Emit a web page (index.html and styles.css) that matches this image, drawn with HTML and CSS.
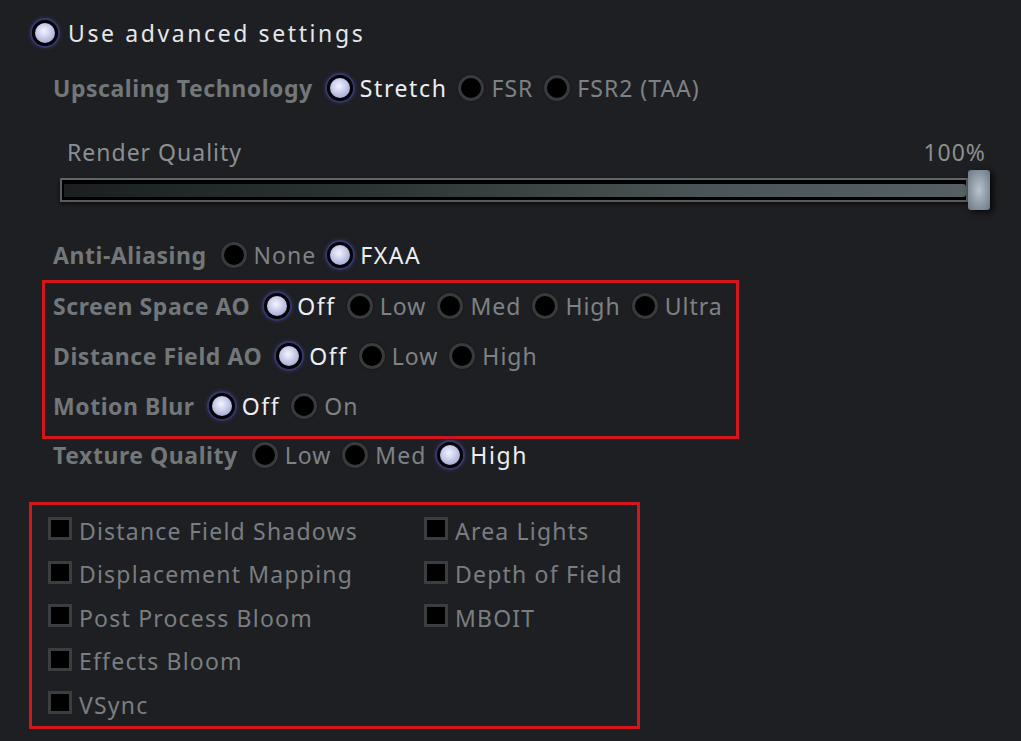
FILE: index.html
```html
<!DOCTYPE html>
<html>
<head>
<meta charset="utf-8">
<link rel="stylesheet" href="styles.css">
</head>
<body>
<div class="page">
  <div class="row top">
    <span class="radio on"></span><span class="title">Use advanced settings</span>
  </div>

  <div class="row r-upscale">
    <span class="label">Upscaling Technology</span>
    <span class="opt"><span class="radio on"></span><span class="val sel">Stretch</span></span>
    <span class="opt"><span class="radio"></span><span class="val">FSR</span></span>
    <span class="opt"><span class="radio"></span><span class="val">FSR2 (TAA)</span></span>
  </div>

  <div class="slider-block">
    <div class="slider-head"><span>Render Quality</span><span>100%</span></div>
    <div class="slider">
      <div class="track"><div class="fill"></div></div>
      <div class="thumb"></div>
    </div>
  </div>

  <div class="row r-aa">
    <span class="label">Anti-Aliasing</span>
    <span class="opt"><span class="radio"></span><span class="val">None</span></span>
    <span class="opt"><span class="radio on"></span><span class="val sel">FXAA</span></span>
  </div>

  <div class="box box1">
    <div class="row">
      <span class="label">Screen Space AO</span>
      <span class="opt"><span class="radio on"></span><span class="val sel">Off</span></span>
      <span class="opt"><span class="radio"></span><span class="val">Low</span></span>
      <span class="opt"><span class="radio"></span><span class="val">Med</span></span>
      <span class="opt"><span class="radio"></span><span class="val">High</span></span>
      <span class="opt"><span class="radio"></span><span class="val">Ultra</span></span>
    </div>
    <div class="row">
      <span class="label">Distance Field AO</span>
      <span class="opt"><span class="radio on"></span><span class="val sel">Off</span></span>
      <span class="opt"><span class="radio"></span><span class="val">Low</span></span>
      <span class="opt"><span class="radio"></span><span class="val">High</span></span>
    </div>
    <div class="row">
      <span class="label">Motion Blur</span>
      <span class="opt"><span class="radio on"></span><span class="val sel">Off</span></span>
      <span class="opt"><span class="radio"></span><span class="val">On</span></span>
    </div>
  </div>

  <div class="row r-tex">
    <span class="label">Texture Quality</span>
    <span class="opt"><span class="radio"></span><span class="val">Low</span></span>
    <span class="opt"><span class="radio"></span><span class="val">Med</span></span>
    <span class="opt"><span class="radio on"></span><span class="val sel">High</span></span>
  </div>

  <div class="box box2">
    <div class="col col1">
      <div class="check"><span class="cb"></span><span>Distance Field Shadows</span></div>
      <div class="check"><span class="cb"></span><span>Displacement Mapping</span></div>
      <div class="check"><span class="cb"></span><span>Post Process Bloom</span></div>
      <div class="check"><span class="cb"></span><span>Effects Bloom</span></div>
      <div class="check"><span class="cb"></span><span>VSync</span></div>
    </div>
    <div class="col">
      <div class="check"><span class="cb"></span><span>Area Lights</span></div>
      <div class="check"><span class="cb"></span><span>Depth of Field</span></div>
      <div class="check"><span class="cb"></span><span>MBOIT</span></div>
    </div>
  </div>
</div>
</body>
</html>
```

FILE: styles.css
```css
html, body {
  margin: 0;
  padding: 0;
  background: #1e1f22;
}
body {
  width: 1021px;
  height: 741px;
  overflow: hidden;
  font-family: "Noto Sans", "Open Sans", sans-serif;
  font-size: 23px;
  color: #7b7f82;
  white-space: nowrap;
}
.page {
  padding-top: 8px;
}
.row {
  display: flex;
  align-items: center;
  height: 50px;
  padding-left: 53px;
}
.row.top {
  padding-left: 32px;
  gap: 10px;
}
.title {
  color: #e4e6ea;
  font-size: 23px;
  letter-spacing: 2.6px;
}
.r-upscale {
  margin-top: 5px;
}
.label {
  font-weight: 700;
  color: #72777a;
  letter-spacing: 0.55px;
  margin-right: 14px;
  flex: none;
}
.opt {
  display: flex;
  align-items: center;
  gap: 7px;
  margin-right: 11px;
  flex: none;
}
.val {
  color: #7e8285;
  letter-spacing: 1px;
}
.val.sel {
  color: #eceef2;
  letter-spacing: 1.6px;
}
.radio {
  display: inline-block;
  width: 26px;
  height: 26px;
  box-sizing: border-box;
  border-radius: 50%;
  background: #000;
  border: 3px solid #383b3d;
  box-shadow: 0 0 2px rgba(0, 0, 0, 0.6);
  flex: none;
}
.radio.on {
  border: 3px solid #040408;
  background: radial-gradient(circle at 45% 40%, #f4f5ff 0%, #c6cae8 45%, #8f94c0 100%);
  box-shadow: 0 0 0 2px #35376c, 0 0 4px 2px rgba(70, 70, 150, 0.45);
}

.slider-block {
  margin-left: 60px;
  width: 930px;
  padding-top: 22px;
}
.slider-head {
  display: flex;
  justify-content: space-between;
  padding-left: 7px;
  padding-right: 4px;
  color: #8b8f92;
  font-size: 23px;
  letter-spacing: 1px;
  line-height: 30px;
  margin-top: 2px;
}
.slider {
  display: flex;
  align-items: center;
  height: 40px;
  margin-top: 3px;
}
.track {
  width: 908px;
  height: 24px;
  box-sizing: border-box;
  border: 2px solid #575c5e;
  border-top-color: #60666a;
  background: #000;
  padding: 4px 0 3px 2px;
  box-shadow: 0 2px 4px rgba(0,0,0,0.6);
}
.fill {
  height: 100%;
  background: linear-gradient(90deg, #1b1f1f 0%, #2d3434 35%, #4a5355 70%, #566063 100%);
  border-radius: 0 3px 3px 0;
}
.thumb {
  width: 22px;
  height: 40px;
  box-sizing: border-box;
  border-radius: 3px;
  background: radial-gradient(ellipse at 50% 50%, #b7c3cf 0%, #8c98a4 55%, #6a7680 100%);
  box-shadow: 3px 2px 6px rgba(0,0,0,0.8);
  flex: none;
}

.r-aa {
  margin-top: 20px;
}
.box {
  border: 3px solid #d2161c;
  box-sizing: border-box;
}
.box1 {
  margin-left: 42px;
  width: 697px;
  height: 159px;
}
.box1 .row {
  padding-left: 8px;
}
.box1 .row:first-child {
  margin-top: -2px;
}
.r-tex {
  height: 32px;
}
.box2 {
  margin-top: 31px;
  margin-left: 29px;
  width: 611px;
  height: 227px;
  display: flex;
  padding: 4px 0 0 16px;
}
.col1 {
  width: 376px;
}
.check {
  display: flex;
  align-items: center;
  height: 43.5px;
  gap: 7px;
  color: #7a7e81;
  letter-spacing: 1.2px;
}
.cb {
  width: 24px;
  height: 23px;
  box-sizing: border-box;
  background: #000;
  border: 3px solid #3b3e40;
  flex: none;
  margin-top: -4px;
}
```
